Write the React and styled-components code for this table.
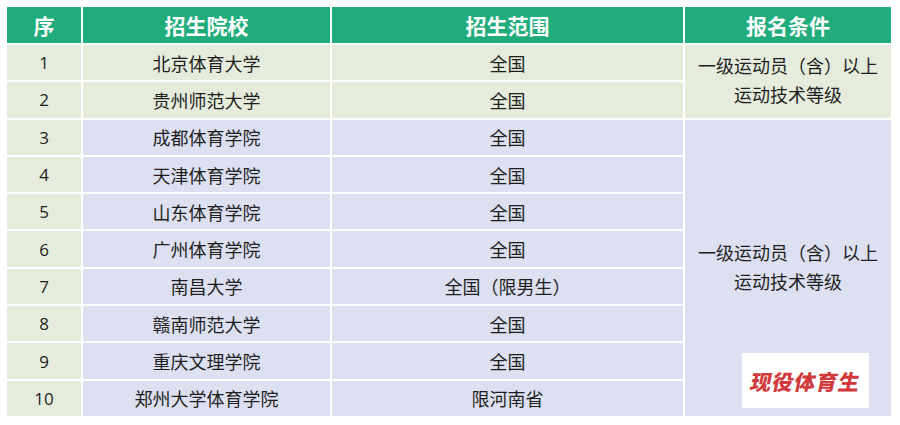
import React from "react";
import styled, { createGlobalStyle } from "styled-components";

const Global = createGlobalStyle`
  html, body { margin: 0; padding: 0; background: #ffffff; }
  body { font-family: "Noto Sans CJK SC", "Noto Sans", sans-serif; }
`;

const Page = styled.div`
  width: 900px;
  height: 425px;
  padding: 7px 0 0 7px;
  box-sizing: border-box;
  position: relative;
`;

const Table = styled.div`
  display: grid;
  grid-template-columns: 74px 247px 351px 206px;
  grid-template-rows: 36px repeat(10, 35.3px);
  gap: 2px;
  width: 884px;
`;

const Head = styled.div`
  background: #21ac7b;
  color: #ffffff;
  font-weight: 700;
  font-size: 21px;
  display: flex;
  align-items: center;
  justify-content: center;
`;

const Cell = styled.div`
  background: ${(p) => (p.$tone === "green" ? "#e5ecdc" : "#dce0f0")};
  color: #1e1e1e;
  font-size: 18px;
  display: flex;
  align-items: center;
  justify-content: center;
  font-family: ${(p) => (p.$num ? '"Open Sans", "Noto Sans", sans-serif' : '"Noto Sans CJK SC", sans-serif')};
  ${(p) => (p.$num ? "font-size: 17px;" : "")}
`;

const Merged = styled(Cell)`
  grid-column: 4;
  grid-row: ${(p) => p.$rows};
  flex-direction: column;
  line-height: 29px;
  text-align: center;
  padding-bottom: 2px;
`;

const Badge = styled.div`
  position: absolute;
  left: 742px;
  top: 353px;
  width: 127px;
  height: 55px;
  background: #ffffff;
  display: flex;
  align-items: center;
  justify-content: center;
`;

const BadgeText = styled.span`
  color: #d03a3c;
  font-family: "Noto Sans CJK SC", sans-serif;
  font-weight: 900;
  font-size: 21px;
  letter-spacing: 1px;
  display: inline-block;
  transform: skewX(-12deg);
`;

const rows = [
  ["1", "北京体育大学", "全国"],
  ["2", "贵州师范大学", "全国"],
  ["3", "成都体育学院", "全国"],
  ["4", "天津体育学院", "全国"],
  ["5", "山东体育学院", "全国"],
  ["6", "广州体育学院", "全国"],
  ["7", "南昌大学", "全国（限男生）"],
  ["8", "赣南师范大学", "全国"],
  ["9", "重庆文理学院", "全国"],
  ["10", "郑州大学体育学院", "限河南省"],
];

export default function App() {
  return (
    <Page>
      <Global />
      <Table>
        <Head>序</Head>
        <Head>招生院校</Head>
        <Head>招生范围</Head>
        <Head>报名条件</Head>
        {rows.map((r, i) => {
          const tone = i < 2 ? "green" : "blue";
          return (
            <React.Fragment key={r[0]}>
              <Cell $tone="green" $num style={{ gridRow: i + 2, gridColumn: 1 }}>{r[0]}</Cell>
              <Cell $tone={tone} style={{ gridRow: i + 2, gridColumn: 2 }}>{r[1]}</Cell>
              <Cell $tone={tone} style={{ gridRow: i + 2, gridColumn: 3 }}>{r[2]}</Cell>
            </React.Fragment>
          );
        })}
        <Merged $tone="green" $rows="2 / span 2">
          <span>一级运动员（含）以上</span>
          <span>运动技术等级</span>
        </Merged>
        <Merged $tone="blue" $rows="4 / span 8">
          <span>一级运动员（含）以上</span>
          <span>运动技术等级</span>
        </Merged>
      </Table>
      <Badge>
        <BadgeText>现役体育生</BadgeText>
      </Badge>
    </Page>
  );
}
